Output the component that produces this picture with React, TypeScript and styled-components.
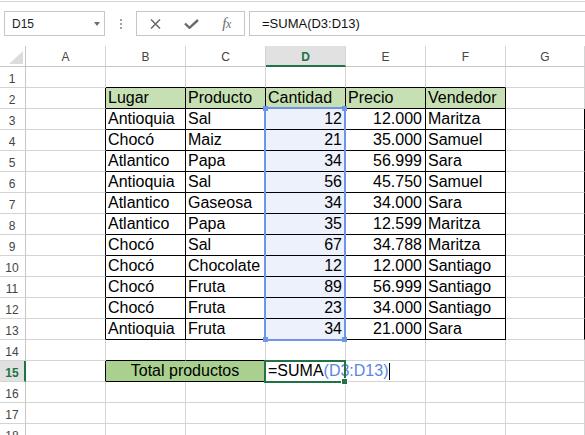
import React from 'react';
import styled, { createGlobalStyle } from 'styled-components';

const GRID = '#d4d4d4';
const HEAD_LINE = '#c6c6c6';
const BLACK = '#000';
const GREEN = '#217346';
const BLUE = '#6f95e9';
const REF_BLUE = '#5a86e0';

const GlobalStyle = createGlobalStyle`
  html, body { margin: 0; padding: 0; background: #fff; }
  body {
    width: 585px;
    height: 435px;
    overflow: hidden;
    font-family: "Liberation Sans", Arial, sans-serif;
  }
`;

const Screen = styled.div`
  width: 585px;
  height: 435px;
  overflow: hidden;
  display: flex;
  flex-direction: column;
`;

/* ---------- formula bar ---------- */
const Toolbar = styled.div`
  margin-top: 1px;
  border-top: 1px solid #d5d5d5;
  height: 45px;
  box-sizing: border-box;
  padding: 9px 0 0 4px;
  display: flex;
  align-items: flex-start;
  flex-shrink: 0;
`;

const NameBox = styled.div`
  width: 101px;
  height: 25px;
  box-sizing: border-box;
  border: 1px solid ${HEAD_LINE};
  display: flex;
  align-items: center;
  justify-content: space-between;
  padding: 0 4px 0 7px;
  font-size: 12px;
  color: #222;
`;

const Caret = styled.span`
  width: 0;
  height: 0;
  border-left: 3.5px solid transparent;
  border-right: 3.5px solid transparent;
  border-top: 4px solid #707070;
`;

const Grip = styled.div`
  width: 31px;
  height: 25px;
  display: flex;
  flex-direction: column;
  align-items: center;
  justify-content: center;
  gap: 2px;
`;

const Dot = styled.span`
  width: 2px;
  height: 2px;
  background: #a0a0a0;
`;

const ButtonBox = styled.div`
  width: 109px;
  height: 25px;
  box-sizing: border-box;
  border: 1px solid ${HEAD_LINE};
  display: grid;
  grid-template-columns: 36px 36px 35px;
  align-items: center;
  justify-items: center;
`;

const IconButton = styled.span`
  display: flex;
  align-items: center;
  justify-content: center;
  color: #6b6b6b;
`;

const Fx = styled.span`
  font-family: "Liberation Serif", "Times New Roman", serif;
  font-style: italic;
  font-size: 15px;
  color: #6b6b6b;
  letter-spacing: -0.5px;
  & small { font-size: 12px; }
`;

const FormulaBox = styled.div`
  margin-left: 4px;
  flex: 1;
  height: 25px;
  box-sizing: border-box;
  border: 1px solid ${HEAD_LINE};
  border-right: none;
  padding-left: 12px;
  display: flex;
  align-items: center;
  font-size: 13px;
  color: #111;
`;

/* ---------- sheet ---------- */
const Sheet = styled.div`
  display: grid;
  grid-template-columns: 26px repeat(6, 80px) 79px;
  grid-auto-rows: 21px;
`;

const Corner = styled.div`
  box-sizing: border-box;
  border-right: 1px solid ${HEAD_LINE};
  border-bottom: 1px solid ${HEAD_LINE};
  display: flex;
  justify-content: flex-end;
  align-items: flex-end;
  padding: 0 2px 2px 0;
`;

const CornerMark = styled.span`
  width: 0;
  height: 0;
  border-left: 14px solid transparent;
  border-bottom: 13px solid #dcdcdc;
`;

const ColHead = styled.div<{ $active?: boolean }>`
  box-sizing: border-box;
  border-right: 1px solid ${GRID};
  border-bottom: ${(p) => (p.$active ? `2px solid ${GREEN}` : `1px solid ${HEAD_LINE}`)};
  background: ${(p) => (p.$active ? '#e1e1e1' : '#fff')};
  color: ${(p) => (p.$active ? GREEN : '#444')};
  font-weight: ${(p) => (p.$active ? 'bold' : 'normal')};
  font-size: 12px;
  display: flex;
  align-items: center;
  justify-content: center;
  padding-top: ${(p) => (p.$active ? 3 : 2)}px;
`;

const RowHead = styled.div<{ $active?: boolean }>`
  box-sizing: border-box;
  border-right: ${(p) => (p.$active ? `2px solid ${GREEN}` : `1px solid ${HEAD_LINE}`)};
  border-bottom: 1px solid ${GRID};
  background: ${(p) => (p.$active ? '#e1e1e1' : '#fff')};
  color: ${(p) => (p.$active ? GREEN : '#444')};
  font-weight: ${(p) => (p.$active ? 'bold' : 'normal')};
  font-size: 12px;
  display: flex;
  align-items: center;
  justify-content: center;
  padding: 4px ${(p) => (p.$active ? 0 : 1)}px 0 0;
`;

type Align = 'left' | 'right' | 'center';

const Cell = styled.div<{
  $rb: string;
  $bb: string;
  $bg?: string;
  $align: Align;
  $span?: number;
  $rel?: boolean;
}>`
  box-sizing: border-box;
  grid-column: span ${(p) => p.$span ?? 1};
  border-right: 1px solid ${(p) => p.$rb};
  border-bottom: 1px solid ${(p) => p.$bb};
  background: ${(p) => p.$bg ?? 'transparent'};
  position: ${(p) => (p.$rel ? 'relative' : 'static')};
  display: flex;
  align-items: center;
  justify-content: ${(p) =>
    p.$align === 'right' ? 'flex-end' : p.$align === 'center' ? 'center' : 'flex-start'};
  padding: 0 3px 0 2px;
  font-size: 16px;
  color: #000;
  white-space: nowrap;
  overflow: visible;
`;

const RangeFrame = styled.div`
  position: absolute;
  left: -2px;
  top: -2px;
  width: 82px;
  height: 234px;
  box-sizing: border-box;
  border: 2px solid ${BLUE};
  pointer-events: none;
  z-index: 2;
`;

const Handle = styled.span<{ $h: 'left' | 'right'; $v: 'top' | 'bottom' }>`
  position: absolute;
  width: 5px;
  height: 5px;
  background: ${BLUE};
  ${(p) => p.$h}: -3px;
  ${(p) => p.$v}: -3px;
`;

const ActiveFrame = styled.div`
  position: absolute;
  left: -2px;
  top: -1px;
  width: 82px;
  height: 23px;
  box-sizing: border-box;
  border: 2px solid ${GREEN};
  pointer-events: none;
  z-index: 3;
`;

const FillHandle = styled.span`
  position: absolute;
  right: -4px;
  bottom: -4px;
  width: 7px;
  height: 7px;
  box-sizing: border-box;
  background: ${GREEN};
  border: 1px solid #fff;
`;

const RefText = styled.span`
  color: ${REF_BLUE};
`;

const TextCursor = styled.span`
  display: inline-block;
  width: 1px;
  height: 17px;
  background: #000;
  margin-left: 1px;
  vertical-align: middle;
`;

/* ---------- data ---------- */
const COLS = ['A', 'B', 'C', 'D', 'E', 'F', 'G'];

const TABLE: string[][] = [
  ['Lugar', 'Producto', 'Cantidad', 'Precio', 'Vendedor'],
  ['Antioquia', 'Sal', '12', '12.000', 'Maritza'],
  ['Chocó', 'Maiz', '21', '35.000', 'Samuel'],
  ['Atlantico', 'Papa', '34', '56.999', 'Sara'],
  ['Antioquia', 'Sal', '56', '45.750', 'Samuel'],
  ['Atlantico', 'Gaseosa', '34', '34.000', 'Sara'],
  ['Atlantico', 'Papa', '35', '12.599', 'Maritza'],
  ['Chocó', 'Sal', '67', '34.788', 'Maritza'],
  ['Chocó', 'Chocolate', '12', '12.000', 'Santiago'],
  ['Chocó', 'Fruta', '89', '56.999', 'Santiago'],
  ['Chocó', 'Fruta', '23', '34.000', 'Santiago'],
  ['Antioquia', 'Fruta', '34', '21.000', 'Sara'],
];

const ROWS = Array.from({ length: 18 }, (_, i) => i + 1);

const inBlock = (r: number) => r >= 2 && r <= 13;

function rightBorder(r: number, c: number): string {
  if (inBlock(r) && c <= 5) return BLACK;
  if (r === 15 && c === 0) return BLACK;
  if (c === 6 && r >= 3 && r <= 13) return BLACK;
  return GRID;
}

function bottomBorder(r: number, c: number): string {
  if (r >= 1 && r <= 13 && c >= 1 && c <= 5) return BLACK;
  if (r === 14 && (c === 1 || c === 2)) return BLACK;
  return GRID;
}

function renderRow(r: number) {
  const cells: React.ReactNode[] = [];
  for (let c = 0; c < 7; c++) {
    const key = `${r}-${c}`;
    if (r === 15 && c === 1) {
      cells.push(
        <Cell key={key} $span={2} $rb={BLACK} $bb={BLACK} $bg="#a9d08e" $align="center">
          Total productos
        </Cell>
      );
      c++;
      continue;
    }
    if (r === 15 && c === 3) {
      cells.push(
        <Cell key={key} $rb={GRID} $bb={GRID} $align="left" $rel>
          <span>
            =SUMA<RefText>(D3:D13)</RefText>
            <TextCursor />
          </span>
          <ActiveFrame>
            <FillHandle />
          </ActiveFrame>
        </Cell>
      );
      continue;
    }
    let text = '';
    let align: Align = 'left';
    let bg: string | undefined;
    if (inBlock(r) && c >= 1 && c <= 5) {
      text = TABLE[r - 2][c - 1];
      if (r === 2) bg = '#c6e0b4';
      else {
        if (c === 3 || c === 4) align = 'right';
        if (c === 3) bg = '#edf1fc';
      }
    }
    const isRangeStart = r === 3 && c === 3;
    cells.push(
      <Cell
        key={key}
        $rb={rightBorder(r, c)}
        $bb={bottomBorder(r, c)}
        $bg={bg}
        $align={align}
        $rel={isRangeStart}
      >
        {text}
        {isRangeStart && (
          <RangeFrame>
            <Handle $h="left" $v="top" />
            <Handle $h="right" $v="top" />
            <Handle $h="left" $v="bottom" />
            <Handle $h="right" $v="bottom" />
          </RangeFrame>
        )}
      </Cell>
    );
  }
  return cells;
}

export default function App() {
  return (
    <Screen>
      <GlobalStyle />
      <Toolbar>
        <NameBox>
          <span>D15</span>
          <Caret />
        </NameBox>
        <Grip>
          <Dot />
          <Dot />
          <Dot />
        </Grip>
        <ButtonBox>
          <IconButton>
            <svg width="11" height="10" viewBox="0 0 11 10">
              <path d="M1 0.5 L10 9.5 M10 0.5 L1 9.5" stroke="currentColor" strokeWidth="1.5" fill="none" />
            </svg>
          </IconButton>
          <IconButton>
            <svg width="15" height="10" viewBox="0 0 15 10">
              <path d="M1 4.5 L5.5 8.8 L14 1" stroke="currentColor" strokeWidth="2.4" fill="none" />
            </svg>
          </IconButton>
          <Fx>
            f<small>x</small>
          </Fx>
        </ButtonBox>
        <FormulaBox>=SUMA(D3:D13)</FormulaBox>
      </Toolbar>
      <Sheet>
        <Corner>
          <CornerMark />
        </Corner>
        {COLS.map((c) => (
          <ColHead key={c} $active={c === 'D'}>
            {c}
          </ColHead>
        ))}
        {ROWS.map((r) => (
          <React.Fragment key={r}>
            <RowHead $active={r === 15}>{r}</RowHead>
            {renderRow(r)}
          </React.Fragment>
        ))}
      </Sheet>
    </Screen>
  );
}
